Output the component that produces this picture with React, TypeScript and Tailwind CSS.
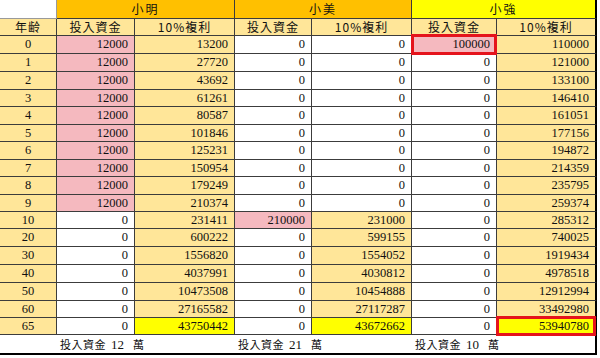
import React from "react";

const LY = "bg-[#FFE699]";
const PK = "bg-[#F5B9BF]";
const WH = "bg-white";
const BY = "bg-[#FFFF00]";

const data: number[][] = [
  [0, 12000, 13200, 0, 0, 100000, 110000],
  [1, 12000, 27720, 0, 0, 0, 121000],
  [2, 12000, 43692, 0, 0, 0, 133100],
  [3, 12000, 61261, 0, 0, 0, 146410],
  [4, 12000, 80587, 0, 0, 0, 161051],
  [5, 12000, 101846, 0, 0, 0, 177156],
  [6, 12000, 125231, 0, 0, 0, 194872],
  [7, 12000, 150954, 0, 0, 0, 214359],
  [8, 12000, 179249, 0, 0, 0, 235795],
  [9, 12000, 210374, 0, 0, 0, 259374],
  [10, 0, 231411, 210000, 231000, 0, 285312],
  [20, 0, 600222, 0, 599155, 0, 740025],
  [30, 0, 1556820, 0, 1554052, 0, 1919434],
  [40, 0, 4037991, 0, 4030812, 0, 4978518],
  [50, 0, 10473508, 0, 10454888, 0, 12912994],
  [60, 0, 27165582, 0, 27117287, 0, 33492980],
  [65, 0, 43750442, 0, 43672662, 0, 53940780],
];

const heights = [
  "h-[18px]",
  "h-[18px]",
  "h-[18px]",
  "h-[17px]",
  "h-[18px]",
  "h-[17px]",
  "h-[18px]",
  "h-[17px]",
  "h-[18px]",
  "h-[17px]",
  "h-[17px]",
  "h-[18px]",
  "h-[18px]",
  "h-[18px]",
  "h-[18px]",
  "h-[17px]",
  "h-[17px]",
];

function bgFor(col: number, i: number): string {
  switch (col) {
    case 0:
      return LY;
    case 1:
      return i < 10 ? PK : WH;
    case 2:
      return i === 16 ? BY : LY;
    case 3:
      return i === 10 ? PK : WH;
    case 4:
      return i < 10 ? WH : i === 16 ? BY : LY;
    case 5:
      return i === 0 ? PK : WH;
    case 6:
      return i === 16 ? BY : LY;
  }
  return WH;
}

const serif = "font-['Liberation_Serif','Noto_Sans_CJK_TC',serif]";
const cjk = "font-['Noto_Sans_CJK_TC','Liberation_Serif',sans-serif]";
const line = "border-[#3c3c3c]";

function Footer({ amount, last }: { amount: string; last?: boolean }) {
  return (
    <td
      colSpan={2}
      className={`bg-white border-b-2 border-b-black ${last ? "border-r-2 border-r-black" : ""} p-0 pl-[3px] text-left text-[11px] leading-none whitespace-nowrap ${cjk}`}
    >
      <span className="tracking-[0.5px]">投入資金</span>
      <span className={`${serif} text-[13px] ml-[5px] mr-[9px]`}>{amount}</span>
      <span>萬</span>
    </td>
  );
}

export default function App() {
  return (
    <div className="w-[600px] h-[358px] bg-white overflow-hidden">
      <table
        className={`table-fixed border-separate border-spacing-0 w-[597px] text-[#111] ${serif}`}
      >
        <colgroup>
          <col className="w-[57px]" />
          <col className="w-[78px]" />
          <col className="w-[100px]" />
          <col className="w-[77px]" />
          <col className="w-[100px]" />
          <col className="w-[85px]" />
          <col className="w-[100px]" />
        </colgroup>
        <tbody>
          <tr className="h-[19px]">
            <td className="bg-white border-r border-b border-[#9a9a9a] p-0" />
            <td
              colSpan={2}
              className={`bg-[#FFC000] border-r border-b ${line} text-center text-[12px] tracking-[2px] leading-none p-0 ${cjk}`}
            >
              小明
            </td>
            <td
              colSpan={2}
              className={`bg-[#FFC000] border-r border-b ${line} text-center text-[12px] tracking-[2px] leading-none p-0 ${cjk}`}
            >
              小美
            </td>
            <td
              colSpan={2}
              className={`bg-[#FFFF00] border-r-2 border-b border-r-black border-b-[#3c3c3c] text-center text-[12px] tracking-[2px] leading-none p-0 ${cjk}`}
            >
              小強
            </td>
          </tr>
          <tr className="h-[17px]">
            <td className={`${LY} border-r border-b ${line} text-center text-[12px] tracking-[1px] leading-none p-0 ${cjk}`}>
              年齢
            </td>
            {["投入資金", "10%複利", "投入資金", "10%複利", "投入資金", "10%複利"].map((t, k) => (
              <td
                key={k}
                className={`${LY} ${k === 5 ? "border-r-2 border-r-black" : `border-r ${line}`} border-b border-b-[#3c3c3c] text-center text-[12px] tracking-[1px] leading-none p-0 ${cjk}`}
              >
                {t}
              </td>
            ))}
          </tr>
          {data.map((r, i) => (
            <tr key={i} className={heights[i]}>
              {r.map((v, c) => {
                const last = c === 6;
                const red = (c === 5 && i === 0) || (c === 6 && i === 16);
                return (
                  <td
                    key={c}
                    className={`${bgFor(c, i)} ${last ? "border-r-2 border-r-black" : `border-r ${line}`} border-b border-b-[#3c3c3c] p-0 text-[12.5px] leading-none ${
                      c === 0 ? "text-center" : "text-right pr-[6px]"
                    } ${red ? "relative" : ""}`}
                  >
                    {v}
                    {red && (
                      <span className="absolute left-[-1px] right-[-1px] top-[-2px] bottom-[-2px] border-[3px] border-[#E5141C] pointer-events-none" />
                    )}
                  </td>
                );
              })}
            </tr>
          ))}
          <tr className="h-[20px]">
            <td className="bg-white border-b-2 border-b-black p-0" />
            <Footer amount="12" />
            <Footer amount="21" />
            <Footer amount="10" last />
          </tr>
        </tbody>
      </table>
    </div>
  );
}
